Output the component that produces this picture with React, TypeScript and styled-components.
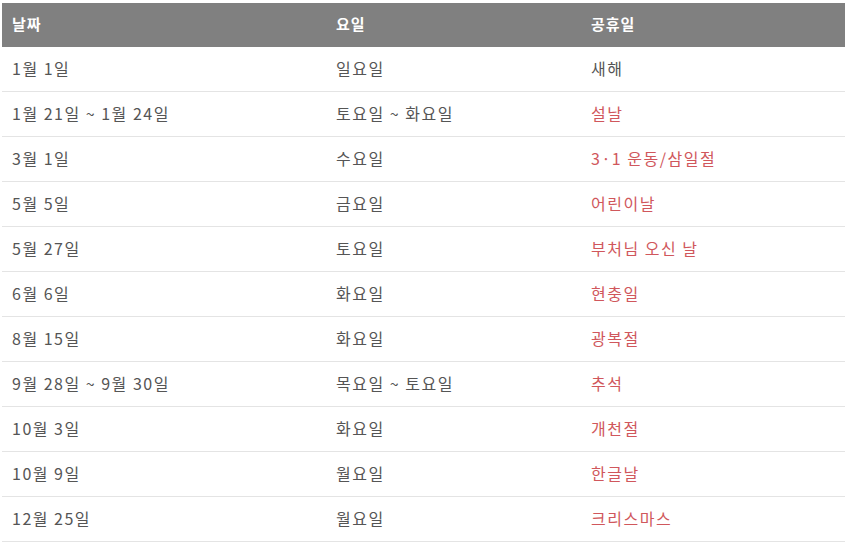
import React from "react";
import styled, { createGlobalStyle } from "styled-components";

const GlobalStyle = createGlobalStyle`
  html, body {
    margin: 0;
    padding: 0;
    background: #ffffff;
  }
`;

const Page = styled.div`
  padding: 3px 5px 0 2px;
  font-family: "Noto Sans CJK KR", "Noto Sans", sans-serif;
`;

const Table = styled.table`
  width: 843px;
  border-collapse: collapse;
  table-layout: fixed;
`;

const HeadCell = styled.th`
  background: #808080;
  color: #ffffff;
  font-weight: 700;
  font-size: 15px;
  letter-spacing: 1px;
  line-height: 20px;
  text-align: left;
  padding: 11px 10px 13px;
`;

const Row = styled.tr`
  border-bottom: 1px solid #e4e4e4;
`;

const Cell = styled.td<{ $red?: boolean }>`
  padding: 11px 10px 13px;
  font-size: 16px;
  line-height: 20px;
  letter-spacing: 1.5px;
  color: ${(p) => (p.$red ? "#d0575c" : "#555555")};
  white-space: nowrap;
`;

const rows: [string, string, string, boolean][] = [
  ["1월 1일", "일요일", "새해", false],
  ["1월 21일 ~ 1월 24일", "토요일 ~ 화요일", "설날", true],
  ["3월 1일", "수요일", "3·1 운동/삼일절", true],
  ["5월 5일", "금요일", "어린이날", true],
  ["5월 27일", "토요일", "부처님 오신 날", true],
  ["6월 6일", "화요일", "현충일", true],
  ["8월 15일", "화요일", "광복절", true],
  ["9월 28일 ~ 9월 30일", "목요일 ~ 토요일", "추석", true],
  ["10월 3일", "화요일", "개천절", true],
  ["10월 9일", "월요일", "한글날", true],
  ["12월 25일", "월요일", "크리스마스", true],
];

export default function App() {
  return (
    <Page>
      <GlobalStyle />
      <Table>
        <colgroup>
          <col style={{ width: 324 }} />
          <col style={{ width: 255 }} />
          <col />
        </colgroup>
        <thead>
          <tr>
            <HeadCell>날짜</HeadCell>
            <HeadCell>요일</HeadCell>
            <HeadCell>공휴일</HeadCell>
          </tr>
        </thead>
        <tbody>
          {rows.map(([date, day, name, red]) => (
            <Row key={date}>
              <Cell>{date}</Cell>
              <Cell>{day}</Cell>
              <Cell $red={red}>{name}</Cell>
            </Row>
          ))}
        </tbody>
      </Table>
    </Page>
  );
}
